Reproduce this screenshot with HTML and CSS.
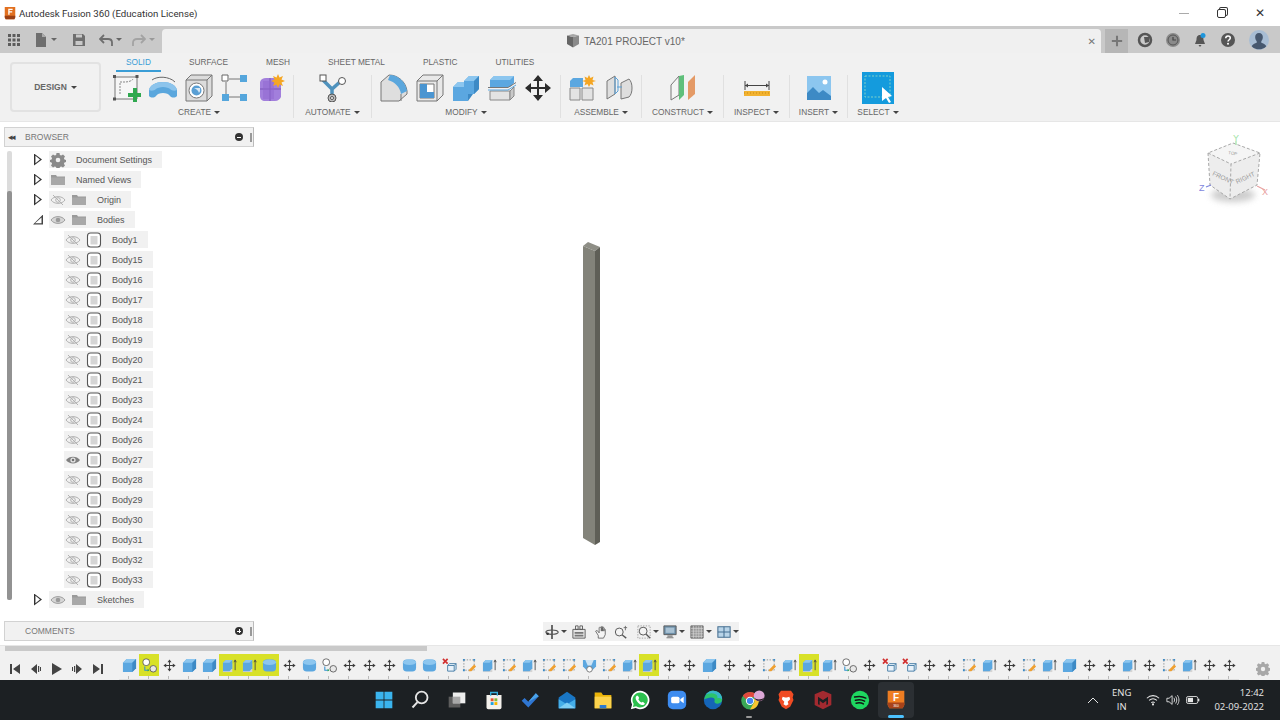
FILE: index.html
```html
<!DOCTYPE html>
<html lang="en">
<head>
    <meta charset="UTF-8">
    <title>Autodesk Fusion 360 (Education License)</title>
    <link rel="stylesheet" href="styles.css">
</head>
<body>
    <!-- icon sheet -->
    <svg class="icon-sheet" xmlns="http://www.w3.org/2000/svg">
        <symbol id="app-f" viewBox="0 0 16 16"><path d="M2 1h12v11l-1 3H3l-1-3z" fill="#e2701f"/><path d="M2 11h12v2l-1 2H3l-1-2z" fill="#9c3f12"/><path d="M6 3h5v1.500H7.500v1.500H10.500v1.500H7.500V10H6z" fill="#fff"/></symbol>
        <!-- top bar -->
        <symbol id="b-grid" viewBox="0 0 14 14"><path d="M1 1h3v3H1zM5.500 1h3v3h-3zM10 1h3v3h-3zM1 5.500h3v3H1zM5.500 5.500h3v3h-3zM10 5.500h3v3h-3zM1 10h3v3H1zM5.500 10h3v3h-3zM10 10h3v3h-3z" fill="#5c5c5c"/></symbol>
        <symbol id="b-doc" viewBox="0 0 14 14"><path d="M2 0h6l4 4v10H2z" fill="#6e6e6e"/><path d="M8 0l4 4H8z" fill="#aaa"/></symbol>
        <symbol id="b-save" viewBox="0 0 14 14"><path d="M1 1h10l2 2v10H1z" fill="#6e6e6e"/><path d="M4 1.500h6v3H4z" fill="#c9c9c9"/><path d="M3.500 8h7v4H3.500z" fill="#c9c9c9"/></symbol>
        <symbol id="b-undo" viewBox="0 0 14 14"><path d="M5 2L1 6l4 4M1.500 6H9c2.500 0 4 1.500 4 3.500V13" fill="none" stroke="#6e6e6e" stroke-width="1.800"/></symbol>
        <symbol id="b-redo" viewBox="0 0 14 14"><path d="M9 2l4 4-4 4M12.500 6H5C2.500 6 1 7.500 1 9.500V13" fill="none" stroke="#a3a3a3" stroke-width="1.800"/></symbol>
        <symbol id="b-plus" viewBox="0 0 14 14"><path d="M7 1v12M1 7h12" stroke="#777" stroke-width="2.400"/></symbol>
        <symbol id="b-data" viewBox="0 0 16 16"><circle cx="8" cy="8" r="6" fill="none" stroke="#555" stroke-width="2.500"/><path d="M7 5h6l-1 5-4 1z" fill="#555"/></symbol>
        <symbol id="b-clock" viewBox="0 0 16 16"><circle cx="8" cy="8" r="7" fill="#8a8a8a"/><circle cx="8" cy="8" r="5" fill="none" stroke="#555"/><path d="M8 5v3h3" fill="none" stroke="#444" stroke-width="1.200"/></symbol>
        <symbol id="b-bell" viewBox="0 0 16 16"><path d="M8 3c-3 0-3.500 2.500-3.500 5L3 12h10l-1.500-4c0-2.500-.5-5-3.500-5z" fill="#555"/><path d="M6.500 13h3L8 15z" fill="#555"/><circle cx="11" cy="3.500" r="2.500" fill="#1f96dc"/></symbol>
        <symbol id="b-help" viewBox="0 0 16 16"><circle cx="8" cy="8" r="7" fill="#555"/><path d="M5.700 6.200C5.800 4.800 6.800 4 8 4s2.300.8 2.300 2.100c0 1.600-2.300 1.700-2.300 3.500" fill="none" stroke="#fff" stroke-width="1.500"/><circle cx="8" cy="11.800" r="1" fill="#fff"/></symbol>
        <symbol id="b-avatar" viewBox="0 0 20 20"><circle cx="10" cy="10" r="10" fill="#a8bdd4"/><path d="M10 3c2.800 0 4 2.200 3.800 4.600-.1 1.600-.8 3-1.500 3.700v1.500c1.800.8 4.200 1.500 5 3.400A10 10 0 0 1 2.700 16.200c.8-1.900 3.200-2.600 5-3.400v-1.500C7 10.600 6.300 9.200 6.200 7.600 6 5.200 7.200 3 10 3z" fill="#47586f"/></symbol>
        <symbol id="b-part" viewBox="0 0 14 14"><path d="M7 3L1 1.500V10l6 3.500z" fill="#666"/><path d="M7 3l6-1.500V10l-6 3.500z" fill="#8a8a8a"/><path d="M1 1.500L7 0l6 1.500L7 3z" fill="#a5a5a5"/></symbol>
        <!-- ribbon -->
        <symbol id="r-sketch" viewBox="0 0 28 28"><path d="M2 3h22v22H2z" fill="#f6f6f6" stroke="#777"/><path d="M0 1h3v3H0zM22.500 1h3v3h-3zM0 23.500h3v3H0z" fill="#555"/><path d="M7 20V8h5c3 0 7-1 8-3" fill="none" stroke="#888" stroke-dasharray="2 1"/><path d="M20 14h4v5h4v4h-4v5h-4v-5h-5v-4h5z" fill="#2fa84f"/></symbol>
        <symbol id="r-revolve" viewBox="0 0 28 28"><path d="M3 6C8 2 20 2 26 8" fill="none" stroke="#666"/><path d="M0 16C1 11 7 8 14 8s13 3 14 8v6c-2 2-5 2-7 0-1-2-4-3-7-3s-6 1-7 3c-2 2-5 2-7 0z" fill="#5ba7dd"/><path d="M0 16C1 11 7 8 14 8s13 3 14 8c-2 1-5 1-7-1-1-1-4-2-7-2s-6 1-7 2c-2 2-5 2-7 1z" fill="#8cc4ec"/></symbol>
        <symbol id="r-hole" viewBox="0 0 28 28"><path d="M1 6l5-5h21v21l-5 5H1z" fill="#dcdcdc" stroke="#777"/><path d="M1 6h21v21" fill="none" stroke="#777"/><path d="M22 6l5-5" stroke="#777"/><circle cx="11.500" cy="16.500" r="7.500" fill="#fff" stroke="#777"/><circle cx="11.500" cy="16.500" r="5" fill="#5a9fd4"/><path d="M9 14h6a6 6 0 0 1-1 5c-1-3-3-4-5-5z" fill="#d8e8f4"/></symbol>
        <symbol id="r-param" viewBox="0 0 28 28"><path d="M8 5h11M5 8v12M8 23h11" stroke="#777"/><path d="M1 1h6v6H1z" fill="#fff" stroke="#666"/><path d="M19 1h7v7h-7zM1 20h7v7H1zM19 20h7v7h-7z" fill="#55a6dc"/></symbol>
        <symbol id="r-form" viewBox="0 0 28 28"><path d="M3 8c1-3 3-4 6-4h8l7 6v13c-1 2-3 4-6 4H8c-3 0-5-2-5-5z" fill="#a27fdc"/><path d="M13 4v23M3 15h21" stroke="#7a57b8"/><path d="M6 7h11v18H6z" fill="#8f68cf" opacity=".5"/><path d="M21 0l1.500 3.500L26 2l-1.500 3.500L28 7l-3.500 1.500L26 12l-3.500-1.500L21 14l-1.500-3.500L16 12l1.500-3.500L14 7l3.500-1.500L16 2l3.500 1.500z" fill="#f5a623"/></symbol>
        <symbol id="r-auto" viewBox="0 0 28 28"><path d="M4 6l9 9 9-8M13 15v7" fill="none" stroke="#4f92bd" stroke-width="3.500"/><rect x="1" y="1" width="6" height="6" fill="#fff" stroke="#555"/><circle cx="23" cy="7" r="3.500" fill="#fff" stroke="#555"/><circle cx="13" cy="24" r="4" fill="#bbb" stroke="#555"/><circle cx="13" cy="24" r="1.500" fill="#fff" stroke="#555"/></symbol>
        <symbol id="r-fillet" viewBox="0 0 28 28"><path d="M1 8L9 1c9 0 17 7 18 16v3l-8 7H1z" fill="#dedede" stroke="#777"/><path d="M10 1c8 0 16 7 17 16l-6 3C20 13 15 8 8 6z" fill="#5ba7dd"/><path d="M21 20v7" stroke="#777"/></symbol>
        <symbol id="r-shell" viewBox="0 0 28 28"><path d="M1 7l6-6h20v20l-6 6H1z" fill="#e8e8e8" stroke="#777"/><path d="M1 7h20v20M21 7l6-6" fill="none" stroke="#777"/><path d="M4 10h14v14H4z" fill="#fff" stroke="#777"/><path d="M4 10h7v8h7v6H4z" fill="#4a95d1"/></symbol>
        <symbol id="r-combine" viewBox="0 0 28 28"><path d="M12 7l5-5h10v13l-5 5h-6v7H1V13l5-5h6z" fill="#5ba7e0"/><path d="M12 7l5-5h10l-5 5zM1 13l5-5h6v5z" fill="#8cc6ef"/><path d="M22 7l5-5v13l-5 5zM16 20l5 0-5 7z" fill="#3d8ac5"/></symbol>
        <symbol id="r-split" viewBox="0 0 28 28"><path d="M2 17h20v9H2z" fill="#e3e3e3" stroke="#888"/><path d="M22 17l4-4v9l-4 4z" fill="#c9c9c9" stroke="#888"/><path d="M2 6l4-4h20v7l-4 4H2z" fill="#5ba7e0"/><path d="M2 6l4-4h20l-4 4z" fill="#8cc6ef"/><path d="M0 16l20 0 8-5" fill="none" stroke="#5ba7e0"/><path d="M0 13.500l20 0 8-5" fill="none" stroke="#777"/></symbol>
        <symbol id="r-move" viewBox="0 0 28 28"><path d="M14 1l5 6h-4v6h6V9l6 5-6 5v-4h-6v6h4l-5 6-5-6h4v-6H7v4l-6-5 6-5v4h6V7H9z" fill="#2b2b2b"/></symbol>
        <symbol id="r-new" viewBox="0 0 28 28"><path d="M1 7l3-3h10v9H1z" fill="#5ba7e0"/><path d="M1 14h10v12H1zM13 14h11v12H13z" fill="#e3e3e3" stroke="#888"/><path d="M20 1l1.500 3 3-1.500-1 3.500 3.500 1-3.500 1 1 3.500-3-1.500-1.500 3-1.500-3-3 1.500 1-3.500-3.500-1 3.500-1-1-3.500 3 1.500z" fill="#f5a623"/></symbol>
        <symbol id="r-joint" viewBox="0 0 28 28"><path d="M2 7l8-5v18l-8 5zM16 9l8-4c2 2 3 5 3 9s-1 7-3 9l-8 2z" fill="#dedede" stroke="#777"/><path d="M10 3l3 3v11l-3 3zM12 13h5" fill="none" stroke="#5b9fd4"/></symbol>
        <symbol id="r-plane" viewBox="0 0 28 28"><path d="M2 11l8-9v19l-8 5z" fill="#f4f4f4" stroke="#777"/><path d="M10 2l5-1v20l-5 5z" fill="#5fbf7a"/><path d="M19 8l7-7v19l-7 6z" fill="#e49a66"/></symbol>
        <symbol id="r-measure" viewBox="0 0 28 28"><path d="M2 7v9M26 7v9M2 11.500h24" fill="none" stroke="#444"/><path d="M2 11.500l3-2v4zM26 11.500l-3-2v4z" fill="#444"/><path d="M1 17h26v5H1z" fill="#f2b230"/><path d="M1 19h26" stroke="#c98a10" stroke-dasharray="1 2"/></symbol>
        <symbol id="r-image" viewBox="0 0 28 28"><path d="M2 2h24v24H2z" fill="#8cc6ef"/><circle cx="20" cy="8" r="2.500" fill="#fff"/><path d="M2 19l6-6 6 6 4-3 8 6v4H2z" fill="#3d8ac5"/></symbol>
        <symbol id="r-select" viewBox="0 0 32 32"><path d="M0 0h32v32H0z" fill="#149bdd"/><path d="M3 4h25v21H3z" fill="none" stroke="#7ed0c8" stroke-dasharray="2 1.500"/><path d="M20 15l10 9-4 1 3 5-2 1-3-5-4 3z" fill="#fff"/></symbol>
        <!-- browser tree -->
        <symbol id="t-gear" viewBox="0 0 16 16"><path d="M6.500 1h3l.4 2 1.300.6 1.800-1.100 2 2-1.100 1.800.6 1.300 2 .4v2l-2 .4-.6 1.300 1.100 1.800-2 2-1.800-1.100-1.300.6-.4 2h-3l-.4-2-1.300-.6-1.800 1.100-2-2 1.100-1.800-.6-1.300-2-.4v-2l2-.4.6-1.300-1.100-1.800 2-2 1.800 1.100 1.300-.6z" fill="#8a8a8a"/><circle cx="8" cy="8" r="2.300" fill="#f0f0f0"/></symbol>
        <symbol id="t-folder" viewBox="0 0 16 16"><path d="M1 3h5l1 1.500h8V13H1z" fill="#9a9a9a"/><path d="M1 5.500h14V13H1z" fill="#a8a8a8"/></symbol>
        <symbol id="t-eye" viewBox="0 0 16 16"><path d="M1 8c3-4.500 11-4.500 14 0-3 4.500-11 4.500-14 0z" fill="#d6d6d6" stroke="#9d9d9d"/><circle cx="8" cy="8" r="2.300" fill="#9a9a9a"/></symbol>
        <symbol id="t-eye-on" viewBox="0 0 16 16"><path d="M1 8c3-4.500 11-4.500 14 0-3 4.500-11 4.500-14 0z" fill="#808080"/><circle cx="8" cy="8" r="2.600" fill="#e4e4e4"/><circle cx="8" cy="8" r="1.300" fill="#707070"/></symbol>
        <symbol id="t-eye-off" viewBox="0 0 16 16"><path d="M1 8c3-4.500 11-4.500 14 0-3 4.500-11 4.500-14 0z" fill="none" stroke="#b2b2b2"/><circle cx="8" cy="8" r="2.300" fill="none" stroke="#b2b2b2"/><path d="M3 3l10 10" stroke="#b2b2b2"/></symbol>
        <symbol id="t-body" viewBox="0 0 16 16"><rect x="1.500" y="1" width="13" height="14" rx="3" fill="#fff" stroke="#555" stroke-width="1.100"/><path d="M4.500 4h7v8.500h-7z" fill="#d5d5d5"/></symbol>
        <!-- timeline -->
        <symbol id="l-box" viewBox="0 0 16 16"><path d="M1 5l4-4h10v10l-4 4H1z" fill="#5ba7e0"/><path d="M1 5l4-4h10l-4 4z" fill="#8cc6ef"/><path d="M11 5l4-4v10l-4 4z" fill="#3d8ac5"/></symbol>
        <symbol id="l-cyl" viewBox="0 0 16 16"><rect x="1" y="1.500" width="14" height="13" rx="4" fill="#5ba7e0"/><ellipse cx="8" cy="4.500" rx="7" ry="3" fill="#8cc6ef"/></symbol>
        <symbol id="l-move" viewBox="0 0 16 16"><path d="M8 1.500l2.200 3H8.500v3h3V5.800L14.500 8l-3 2.200V8.500h-3v3h1.700L8 14.500l-2.200-3h1.700v-3h-3v1.700L1.500 8l3-2.200v1.700h3v-3H5.800z" fill="#3c3c3c"/></symbol>
        <symbol id="l-press" viewBox="0 0 16 16"><path d="M1 6h10v9H1z" fill="#d4d4d4"/><path d="M1 5l3-3h7v9l-3 3H1z" fill="#5ba7e0"/><path d="M1 5l3-3h7L8 5z" fill="#8cc6ef"/><path d="M14 13V3M12.800 4.500L14 2l1.200 2.500" fill="none" stroke="#444" stroke-width=".9"/></symbol>
        <symbol id="l-sketch" viewBox="0 0 16 16"><path d="M2 2h11v11H2z" fill="none" stroke="#888" stroke-dasharray="1.500 1.500" stroke-width=".9"/><path d="M1 1h2v2H1zM12 1h2v2h-2zM1 12h2v2H1z" fill="#3d8ac5"/><path d="M7 14l1-2 5-5 2 2-5 5z" fill="#f0a030"/></symbol>
        <symbol id="l-joint" viewBox="0 0 16 16"><rect x="1" y="1" width="7" height="7" rx="3" fill="#fff" stroke="#555" stroke-width=".9"/><circle cx="12" cy="11.500" r="3.500" fill="#e8e8e8" stroke="#555" stroke-width=".9"/><path d="M3 9v4h4" fill="none" stroke="#2f8fd0" stroke-width="1.100"/><path d="M6 11.500L8 13l-2 1.500" fill="#2fa84f"/></symbol>
        <symbol id="l-del" viewBox="0 0 16 16"><path d="M1 1l5 5M6 1L1 6" stroke="#d13030" stroke-width="1.800"/><path d="M6 8l2-2h7v6l-2 2H6z" fill="#e8f2fa" stroke="#4a7fa8"/><path d="M6 8h7v6M13 8l2-2" fill="none" stroke="#4a7fa8"/></symbol>
        <symbol id="l-shell" viewBox="0 0 16 16"><path d="M1 2h14v7l-4 4H5L1 9z" fill="#5ba7e0"/><path d="M3.500 2h9L10 8H6z" fill="#cfe4f4"/><circle cx="8" cy="12" r="3" fill="#fff" stroke="#777"/></symbol>
        <symbol id="l-gear" viewBox="0 0 16 16"><path d="M6.500 0h3l.4 2 1.300.6 1.800-1.100 2 2-1.100 1.800.6 1.300 2 .4v3l-2 .4-.6 1.300 1.100 1.800-2 2-1.800-1.100-1.300.6-.4 2h-3l-.4-2-1.300-.6-1.800 1.100-2-2 1.100-1.800-.6-1.300-2-.4v-3l2-.4.6-1.300-1.100-1.800 2-2 1.800 1.100 1.300-.6z" fill="#a8a8a8"/><circle cx="8" cy="8" r="2.500" fill="#f0f0f0"/></symbol>
        <symbol id="c-first" viewBox="0 0 12 12"><path d="M1 1h2v10H1zM11 1v10L4 6z" fill="#444"/></symbol>
        <symbol id="c-prev" viewBox="0 0 12 12"><path d="M7 1v10L1 6zM8 3h1.200v6H8zM10 4h1v4h-1z" fill="#444"/></symbol>
        <symbol id="c-play" viewBox="0 0 12 12"><path d="M1 0l10 6-10 6z" fill="#444"/></symbol>
        <symbol id="c-next" viewBox="0 0 12 12"><path d="M5 1v10l6-5zM3 3h1.200v6H3zM1 4h1v4H1z" fill="#444"/></symbol>
        <symbol id="c-last" viewBox="0 0 12 12"><path d="M9 1h2v10H9zM1 1v10l7-5z" fill="#444"/></symbol>
        <!-- viewport bar -->
        <symbol id="v-orbit" viewBox="0 0 16 16"><path d="M7 0h2v16H7z" fill="#555"/><path d="M1 8c1-3 13-3 14 0s-13 4-14 0z" fill="none" stroke="#555" stroke-width="1.300"/><circle cx="3" cy="10" r="1.500" fill="#333"/></symbol>
        <symbol id="v-look" viewBox="0 0 16 16"><path d="M1 5h14v10H1z" fill="#e6e6e6" stroke="#555"/><path d="M3 8h10v2H3zM3 11h10v2H3z" fill="#777"/><path d="M4 1h3v4H4zM9 1h3v4H9z" fill="none" stroke="#555"/></symbol>
        <symbol id="v-hand" viewBox="0 0 16 16"><path d="M3 7l3 5v3h6l2-4V5c-1-1-1.500 0-1.500 0v2-4c-1-1-1.500 0-1.500 0v4-5c-1-1-1.500 0-1.500 0v5-4C7.500 2 7 3 7 3v6L5 6.500C3.500 6 3 7 3 7z" fill="#f4f4f4" stroke="#555" stroke-width=".9"/></symbol>
        <symbol id="v-zoom" viewBox="0 0 16 16"><circle cx="6" cy="8" r="4.500" fill="#f4f4f4" stroke="#555" stroke-width="1.100"/><path d="M9.500 11.500L14 15" stroke="#555" stroke-width="1.500"/><path d="M13 1v5M11 3h4" stroke="#666"/></symbol>
        <symbol id="v-fit" viewBox="0 0 16 16"><path d="M1 1h14v14H1z" fill="none" stroke="#999" stroke-dasharray="1.500 1.500"/><circle cx="7" cy="7" r="4.500" fill="#f4f4f4" stroke="#555" stroke-width="1.100"/><path d="M10.500 10.500L15 15" stroke="#555" stroke-width="1.600"/></symbol>
        <symbol id="v-display" viewBox="0 0 16 16"><path d="M1 1h14v10H1z" fill="#6d8fa8" stroke="#555"/><path d="M3 3h10v6H3z" fill="#a9c2d4"/><path d="M5 12h6v1.500H5zM4 14h8v1H4z" fill="#777"/></symbol>
        <symbol id="v-grid" viewBox="0 0 16 16"><path d="M1 1h14v14H1z" fill="#999" stroke="#666"/><path d="M4 1v14M7 1v14M10 1v14M13 1v14M1 4h14M1 7h14M1 10h14M1 13h14" stroke="#ddd" stroke-width=".6"/></symbol>
        <symbol id="v-split" viewBox="0 0 16 16"><path d="M1 2h14v12H1z" fill="#b9d4e8" stroke="#456f91" stroke-width="1.200"/><path d="M8 2v12M1 8h14" stroke="#456f91" stroke-width="1.200"/></symbol>
    </svg>

    <!-- window title -->
    <header class="titlebar">
        <svg class="app-icon"><use href="#app-f"/></svg>
        <span class="title-text">Autodesk Fusion 360 (Education License)</span>
        <div class="win-controls">
            <span class="win-btn win-min"></span>
            <span class="win-btn win-restore"></span>
            <span class="win-btn win-close">&#x2715;</span>
        </div>
    </header>

    <!-- quick access + document tab -->
    <div class="topbar">
        <div class="quick-tools">
            <svg class="qt qt-grid"><use href="#b-grid"/></svg>
            <svg class="qt qt-doc"><use href="#b-doc"/></svg><i class="caret"></i>
            <svg class="qt qt-save"><use href="#b-save"/></svg>
            <svg class="qt qt-undo"><use href="#b-undo"/></svg><i class="caret"></i>
            <svg class="qt qt-redo"><use href="#b-redo"/></svg><i class="caret caret-dim"></i>
        </div>
        <div class="doc-tab">
            <div class="doc-name">
                <svg class="doc-icon"><use href="#b-part"/></svg>
                <span>TA201 PROJECT v10*</span>
            </div>
            <span class="doc-close">&#x2715;</span>
        </div>
        <div class="new-tab"><svg class="new-tab-icon"><use href="#b-plus"/></svg></div>
        <div class="user-tools">
            <svg class="ut"><use href="#b-data"/></svg>
            <svg class="ut"><use href="#b-clock"/></svg>
            <svg class="ut"><use href="#b-bell"/></svg>
            <svg class="ut"><use href="#b-help"/></svg>
            <svg class="ut-avatar"><use href="#b-avatar"/></svg>
        </div>
    </div>

    <!-- ribbon -->
    <div class="ribbon">
        <button class="design-btn">DESIGN<i class="caret caret-dark"></i></button>
        <div class="ribbon-main">
            <div class="tabs">
                <span class="tab tab-active">SOLID</span>
                <span class="tab">SURFACE</span>
                <span class="tab">MESH</span>
                <span class="tab">SHEET METAL</span>
                <span class="tab">PLASTIC</span>
                <span class="tab">UTILITIES</span>
            </div>
            <div class="tools">
                <div class="group group-create">
                    <div class="group-icons">
                        <svg class="ri"><use href="#r-sketch"/></svg>
                        <svg class="ri"><use href="#r-revolve"/></svg>
                        <svg class="ri"><use href="#r-hole"/></svg>
                        <svg class="ri"><use href="#r-param"/></svg>
                        <svg class="ri"><use href="#r-form"/></svg>
                    </div>
                    <div class="group-label">CREATE<i class="caret caret-dark"></i></div>
                </div>
                <div class="group group-automate">
                    <div class="group-icons"><svg class="ri"><use href="#r-auto"/></svg></div>
                    <div class="group-label">AUTOMATE<i class="caret caret-dark"></i></div>
                </div>
                <div class="group group-modify">
                    <div class="group-icons">
                        <svg class="ri"><use href="#r-fillet"/></svg>
                        <svg class="ri"><use href="#r-shell"/></svg>
                        <svg class="ri"><use href="#r-combine"/></svg>
                        <svg class="ri"><use href="#r-split"/></svg>
                        <svg class="ri"><use href="#r-move"/></svg>
                    </div>
                    <div class="group-label">MODIFY<i class="caret caret-dark"></i></div>
                </div>
                <div class="group group-assemble">
                    <div class="group-icons">
                        <svg class="ri"><use href="#r-new"/></svg>
                        <svg class="ri"><use href="#r-joint"/></svg>
                    </div>
                    <div class="group-label">ASSEMBLE<i class="caret caret-dark"></i></div>
                </div>
                <div class="group group-construct">
                    <div class="group-icons"><svg class="ri"><use href="#r-plane"/></svg></div>
                    <div class="group-label">CONSTRUCT<i class="caret caret-dark"></i></div>
                </div>
                <div class="group group-inspect">
                    <div class="group-icons"><svg class="ri"><use href="#r-measure"/></svg></div>
                    <div class="group-label">INSPECT<i class="caret caret-dark"></i></div>
                </div>
                <div class="group group-insert">
                    <div class="group-icons"><svg class="ri"><use href="#r-image"/></svg></div>
                    <div class="group-label">INSERT<i class="caret caret-dark"></i></div>
                </div>
                <div class="group group-select">
                    <div class="group-icons"><svg class="ri-select"><use href="#r-select"/></svg></div>
                    <div class="group-label">SELECT<i class="caret caret-dark"></i></div>
                </div>
            </div>
        </div>
    </div>

    <!-- 3d canvas -->
    <main class="canvas">
        <div class="sidebar">
            <div class="panel-head">
                <span class="panel-arrows">&#x25C2;&#x25C2;</span>
                <span class="panel-title">BROWSER</span>
                <span class="panel-dot panel-dot-minus"></span>
                <span class="panel-grip"></span>
            </div>
            <div class="tree">
                <div class="tree-scroll"><div class="tree-thumb"></div></div>
                <div class="tree-rows">
                    <div class="row"><i class="arrow"></i><div class="pill"><svg class="ti"><use href="#t-gear"/></svg><span class="lbl">Document Settings</span></div></div>
                    <div class="row"><i class="arrow"></i><div class="pill"><svg class="ti"><use href="#t-folder"/></svg><span class="lbl">Named Views</span></div></div>
                    <div class="row"><i class="arrow"></i><div class="pill"><svg class="ti"><use href="#t-eye-off"/></svg><svg class="ti"><use href="#t-folder"/></svg><span class="lbl">Origin</span></div></div>
                    <div class="row"><i class="arrow-open"></i><div class="pill"><svg class="ti"><use href="#t-eye"/></svg><svg class="ti"><use href="#t-folder"/></svg><span class="lbl">Bodies</span></div></div>
                    <div class="row row-body"><div class="pill"><svg class="ti"><use href="#t-eye-off"/></svg><svg class="ti"><use href="#t-body"/></svg><span class="lbl">Body1</span></div></div>
                    <div class="row row-body"><div class="pill"><svg class="ti"><use href="#t-eye-off"/></svg><svg class="ti"><use href="#t-body"/></svg><span class="lbl">Body15</span></div></div>
                    <div class="row row-body"><div class="pill"><svg class="ti"><use href="#t-eye-off"/></svg><svg class="ti"><use href="#t-body"/></svg><span class="lbl">Body16</span></div></div>
                    <div class="row row-body"><div class="pill"><svg class="ti"><use href="#t-eye-off"/></svg><svg class="ti"><use href="#t-body"/></svg><span class="lbl">Body17</span></div></div>
                    <div class="row row-body"><div class="pill"><svg class="ti"><use href="#t-eye-off"/></svg><svg class="ti"><use href="#t-body"/></svg><span class="lbl">Body18</span></div></div>
                    <div class="row row-body"><div class="pill"><svg class="ti"><use href="#t-eye-off"/></svg><svg class="ti"><use href="#t-body"/></svg><span class="lbl">Body19</span></div></div>
                    <div class="row row-body"><div class="pill"><svg class="ti"><use href="#t-eye-off"/></svg><svg class="ti"><use href="#t-body"/></svg><span class="lbl">Body20</span></div></div>
                    <div class="row row-body"><div class="pill"><svg class="ti"><use href="#t-eye-off"/></svg><svg class="ti"><use href="#t-body"/></svg><span class="lbl">Body21</span></div></div>
                    <div class="row row-body"><div class="pill"><svg class="ti"><use href="#t-eye-off"/></svg><svg class="ti"><use href="#t-body"/></svg><span class="lbl">Body23</span></div></div>
                    <div class="row row-body"><div class="pill"><svg class="ti"><use href="#t-eye-off"/></svg><svg class="ti"><use href="#t-body"/></svg><span class="lbl">Body24</span></div></div>
                    <div class="row row-body"><div class="pill"><svg class="ti"><use href="#t-eye-off"/></svg><svg class="ti"><use href="#t-body"/></svg><span class="lbl">Body26</span></div></div>
                    <div class="row row-body"><div class="pill"><svg class="ti"><use href="#t-eye-on"/></svg><svg class="ti"><use href="#t-body"/></svg><span class="lbl">Body27</span></div></div>
                    <div class="row row-body"><div class="pill"><svg class="ti"><use href="#t-eye-off"/></svg><svg class="ti"><use href="#t-body"/></svg><span class="lbl">Body28</span></div></div>
                    <div class="row row-body"><div class="pill"><svg class="ti"><use href="#t-eye-off"/></svg><svg class="ti"><use href="#t-body"/></svg><span class="lbl">Body29</span></div></div>
                    <div class="row row-body"><div class="pill"><svg class="ti"><use href="#t-eye-off"/></svg><svg class="ti"><use href="#t-body"/></svg><span class="lbl">Body30</span></div></div>
                    <div class="row row-body"><div class="pill"><svg class="ti"><use href="#t-eye-off"/></svg><svg class="ti"><use href="#t-body"/></svg><span class="lbl">Body31</span></div></div>
                    <div class="row row-body"><div class="pill"><svg class="ti"><use href="#t-eye-off"/></svg><svg class="ti"><use href="#t-body"/></svg><span class="lbl">Body32</span></div></div>
                    <div class="row row-body"><div class="pill"><svg class="ti"><use href="#t-eye-off"/></svg><svg class="ti"><use href="#t-body"/></svg><span class="lbl">Body33</span></div></div>
                    <div class="row"><i class="arrow"></i><div class="pill"><svg class="ti"><use href="#t-eye"/></svg><svg class="ti"><use href="#t-folder"/></svg><span class="lbl">Sketches</span></div></div>
                </div>
            </div>
            <div class="panel-head">
                <span class="panel-title panel-title-solo">COMMENTS</span>
                <span class="panel-dot panel-dot-plus"></span>
                <span class="panel-grip"></span>
            </div>
        </div>

        <!-- the model -->
        <svg class="model" width="20" height="306" viewBox="0 0 20 306">
            <path d="M1 4L6 0l12 5-5 4z" fill="#8e8e86"/>
            <path d="M1 4l12 5v294L1 296z" fill="#83837a"/>
            <path d="M13 9l5-4v295l-5 3z" fill="#5f5f57"/>
        </svg>

        <!-- view cube -->
        <svg class="viewcube" width="80" height="90" viewBox="0 0 80 90">
            <ellipse class="cube-shadow" cx="34" cy="64" rx="22" ry="7"/>
            <path d="M9 22l25-10 27 10-3 32-27 14-20-14z" fill="#ededed"/>
            <path d="M9 22l25-10 27 10-29 11z" fill="#f5f5f5"/>
            <path d="M9 22l23 11-1 35M61 22L32 33M9 22l2 32 20 14 27-14 3-32-27-10z" fill="none" stroke="#a8a8a8" stroke-dasharray="3 2"/>
            <text class="cube-text" transform="translate(13 44) rotate(25)">FRONT</text>
            <text class="cube-text" transform="translate(38 53) rotate(-25)">RIGHT</text>
            <text class="cube-text cube-small" transform="translate(29 23) rotate(10)">TOP</text>
            <path d="M37 10v4" stroke="#9fe3a6" stroke-width="1.200"/>
            <path d="M7 56l5-2" stroke="#7f86dd" stroke-width="1.200"/>
            <path d="M58 55l8 4" stroke="#e8a0a0" stroke-width="1.200"/>
            <text class="axis axis-y" x="34" y="10">Y</text>
            <text class="axis axis-z" x="0" y="60">Z</text>
            <text class="axis axis-x" x="63" y="64">X</text>
        </svg>

        <!-- view controls -->
        <div class="viewbar">
            <svg class="vi"><use href="#v-orbit"/></svg><i class="caret caret-dark"></i>
            <svg class="vi vi-look"><use href="#v-look"/></svg>
            <svg class="vi vi-hand"><use href="#v-hand"/></svg>
            <svg class="vi vi-zoom"><use href="#v-zoom"/></svg>
            <svg class="vi vi-fit"><use href="#v-fit"/></svg><i class="caret caret-dark"></i>
            <svg class="vi vi-display"><use href="#v-display"/></svg><i class="caret caret-dark"></i>
            <svg class="vi vi-grid"><use href="#v-grid"/></svg><i class="caret caret-dark"></i>
            <svg class="vi vi-split"><use href="#v-split"/></svg><i class="caret caret-dark"></i>
        </div>
    </main>

    <!-- timeline -->
    <div class="timeline-scroll"><div class="timeline-thumb"></div></div>
    <div class="timeline">
        <div class="tl-controls">
            <svg class="tc"><use href="#c-first"/></svg>
            <svg class="tc"><use href="#c-prev"/></svg>
            <svg class="tc"><use href="#c-play"/></svg>
            <svg class="tc"><use href="#c-next"/></svg>
            <svg class="tc"><use href="#c-last"/></svg>
        </div>
        <div class="tl-track">
            <div class="tl-item"><svg class="li"><use href="#l-box"/></svg></div>
            <div class="tl-item tl-hl"><svg class="li"><use href="#l-joint"/></svg></div>
            <div class="tl-item"><svg class="li"><use href="#l-move"/></svg></div>
            <div class="tl-item"><svg class="li"><use href="#l-box"/></svg></div>
            <div class="tl-item"><svg class="li"><use href="#l-box"/></svg></div>
            <div class="tl-item tl-hl"><svg class="li"><use href="#l-press"/></svg></div>
            <div class="tl-item tl-hl"><svg class="li"><use href="#l-press"/></svg></div>
            <div class="tl-item tl-hl"><svg class="li"><use href="#l-cyl"/></svg></div>
            <div class="tl-item"><svg class="li"><use href="#l-move"/></svg></div>
            <div class="tl-item"><svg class="li"><use href="#l-cyl"/></svg></div>
            <div class="tl-item"><svg class="li"><use href="#l-joint"/></svg></div>
            <div class="tl-item"><svg class="li"><use href="#l-move"/></svg></div>
            <div class="tl-item"><svg class="li"><use href="#l-move"/></svg></div>
            <div class="tl-item"><svg class="li"><use href="#l-move"/></svg></div>
            <div class="tl-item"><svg class="li"><use href="#l-cyl"/></svg></div>
            <div class="tl-item"><svg class="li"><use href="#l-cyl"/></svg></div>
            <div class="tl-item"><svg class="li"><use href="#l-del"/></svg></div>
            <div class="tl-item"><svg class="li"><use href="#l-sketch"/></svg></div>
            <div class="tl-item"><svg class="li"><use href="#l-press"/></svg></div>
            <div class="tl-item"><svg class="li"><use href="#l-sketch"/></svg></div>
            <div class="tl-item"><svg class="li"><use href="#l-press"/></svg></div>
            <div class="tl-item"><svg class="li"><use href="#l-sketch"/></svg></div>
            <div class="tl-item"><svg class="li"><use href="#l-sketch"/></svg></div>
            <div class="tl-item"><svg class="li"><use href="#l-shell"/></svg></div>
            <div class="tl-item"><svg class="li"><use href="#l-sketch"/></svg></div>
            <div class="tl-item"><svg class="li"><use href="#l-press"/></svg></div>
            <div class="tl-item tl-hl"><svg class="li"><use href="#l-press"/></svg></div>
            <div class="tl-item"><svg class="li"><use href="#l-move"/></svg></div>
            <div class="tl-item"><svg class="li"><use href="#l-move"/></svg></div>
            <div class="tl-item"><svg class="li"><use href="#l-box"/></svg></div>
            <div class="tl-item"><svg class="li"><use href="#l-move"/></svg></div>
            <div class="tl-item"><svg class="li"><use href="#l-move"/></svg></div>
            <div class="tl-item"><svg class="li"><use href="#l-sketch"/></svg></div>
            <div class="tl-item"><svg class="li"><use href="#l-press"/></svg></div>
            <div class="tl-item tl-hl"><svg class="li"><use href="#l-press"/></svg></div>
            <div class="tl-item"><svg class="li"><use href="#l-press"/></svg></div>
            <div class="tl-item"><svg class="li"><use href="#l-joint"/></svg></div>
            <div class="tl-item"><svg class="li"><use href="#l-move"/></svg></div>
            <div class="tl-item"><svg class="li"><use href="#l-del"/></svg></div>
            <div class="tl-item"><svg class="li"><use href="#l-del"/></svg></div>
            <div class="tl-item"><svg class="li"><use href="#l-move"/></svg></div>
            <div class="tl-item"><svg class="li"><use href="#l-move"/></svg></div>
            <div class="tl-item"><svg class="li"><use href="#l-sketch"/></svg></div>
            <div class="tl-item"><svg class="li"><use href="#l-press"/></svg></div>
            <div class="tl-item"><svg class="li"><use href="#l-move"/></svg></div>
            <div class="tl-item"><svg class="li"><use href="#l-sketch"/></svg></div>
            <div class="tl-item"><svg class="li"><use href="#l-press"/></svg></div>
            <div class="tl-item"><svg class="li"><use href="#l-box"/></svg></div>
            <div class="tl-item"><svg class="li"><use href="#l-move"/></svg></div>
            <div class="tl-item"><svg class="li"><use href="#l-move"/></svg></div>
            <div class="tl-item"><svg class="li"><use href="#l-press"/></svg></div>
            <div class="tl-item"><svg class="li"><use href="#l-move"/></svg></div>
            <div class="tl-item"><svg class="li"><use href="#l-sketch"/></svg></div>
            <div class="tl-item"><svg class="li"><use href="#l-press"/></svg></div>
            <div class="tl-item"><svg class="li"><use href="#l-move"/></svg></div>
            <div class="tl-item"><svg class="li"><use href="#l-move"/></svg></div>
        </div>
        <svg class="tl-gear"><use href="#l-gear"/></svg>
    </div>

    <!-- windows taskbar -->
    <footer class="taskbar">
        <div class="task-spacer"></div>
        <div class="task-apps">
            <div class="task-app"><svg class="tk" viewBox="0 0 24 24"><path d="M2 2h9.500v9.500H2zM12.500 2H22v9.500h-9.500zM2 12.500h9.500V22H2zM12.500 12.500H22V22h-9.500z" fill="#3ab4ee"/></svg></div>
            <div class="task-app"><svg class="tk" viewBox="0 0 24 24"><circle cx="14" cy="9" r="7" fill="none" stroke="#e6e6e6" stroke-width="2.200"/><path d="M9 14.500L3 21" stroke="#e6e6e6" stroke-width="2.400"/></svg></div>
            <div class="task-app"><svg class="tk" viewBox="0 0 24 24"><path d="M2 8h14v13H2z" fill="#5d5d5d"/><path d="M7 3h15v13H7z" fill="#ededed"/><path d="M7 8h9v8H7z" fill="#a8a8a8"/></svg></div>
            <div class="task-app"><svg class="tk" viewBox="0 0 24 24"><path d="M3 6h18v15c0 1-1 2-2 2H5c-1 0-2-1-2-2z" fill="#f4f1ec"/><path d="M8 7V3h8v4" fill="none" stroke="#35b0dd" stroke-width="1.600"/><path d="M8 10h3.500v3.500H8z" fill="#e5532d"/><path d="M12.500 10H16v3.500h-3.500z" fill="#7fbb3c"/><path d="M8 14.500h3.500V18H8z" fill="#1fa3e0"/><path d="M12.500 14.500H16V18h-3.500z" fill="#f7b500"/></svg></div>
            <div class="task-app"><svg class="tk" viewBox="0 0 24 24"><path d="M2 13l3.500-3.500L10 14 19 4l3.500 3.500L10 21z" fill="#2f76d2"/><path d="M5.500 9.500L10 14 19 4l3.500 3.500L10 14z" fill="#4aa3e8"/></svg></div>
            <div class="task-app"><svg class="tk" viewBox="0 0 24 24"><path d="M2 9l10-7 10 7v13H2z" fill="#1976c4"/><path d="M2 11l10 6 10-6v11H2z" fill="#45aee8"/><path d="M2 22l10-7 10 7z" fill="#7fcff5"/></svg></div>
            <div class="task-app"><svg class="tk" viewBox="0 0 24 24"><path d="M2 3h8l2 3h10v16H2z" fill="#eab308"/><path d="M2 8h20v14H2z" fill="#fcd34d"/><path d="M8 18h8v4H8z" fill="#2b7bd0"/></svg></div>
            <div class="task-app"><svg class="tk" viewBox="0 0 24 24"><path d="M12 1a11 11 0 0 0-9.500 16.500L1 23l5.800-1.500A11 11 0 1 0 12 1z" fill="#fff"/><path d="M12 3a9 9 0 0 0-7.600 13.700L3.500 20.500l3.800-1A9 9 0 1 0 12 3z" fill="#2cc04e"/><path d="M8 7c-1 1-1.500 2-1 4 1 3 4 6 7 7 2 .5 3-.5 4-1.500l-2.500-2.500-1.500 1c-2-1-3-2-4-4l1-1.500L9.500 7z" fill="#fff"/></svg></div>
            <div class="task-app"><svg class="tk" viewBox="0 0 24 24"><rect x="1" y="1" width="22" height="22" rx="6" fill="#3d8cf0"/><rect x="5" y="8" width="10" height="8" rx="2" fill="#fff"/><path d="M16 11l4-3v8l-4-3z" fill="#fff"/></svg></div>
            <div class="task-app"><svg class="tk" viewBox="0 0 24 24"><circle cx="12" cy="12" r="11" fill="#1565b8"/><path d="M1.500 11C3 4 8 1 12 1c6 0 11 5 11 10.500 0 3-2.500 5-5.500 5S13 15 14 12c.5-2-2-3.500-5-3C5 9.500 2.500 11 1.500 11z" fill="#2cc36b"/><path d="M23 11c0-5-4-10-11-10-4 0-7 2-9 5 3-2 8-3 12-1 2 1 3 3 2 5 2-1 4 0 6 1z" fill="#37b6c9"/></svg></div>
            <div class="task-app">
                <svg class="tk tk-wide" viewBox="0 0 30 24"><circle cx="12" cy="13" r="10.500" fill="#3aa757"/><path d="M12 2.500a10.500 10.500 0 0 1 9.500 6H12a4.500 4.500 0 0 0-4.500 3L3.400 7A10.500 10.500 0 0 1 12 2.500z" fill="#e0483d"/><path d="M21.500 8.500A10.500 10.500 0 0 1 12 23.500l4-7a4.500 4.500 0 0 0 .5-5.500z" fill="#f9c52f"/><circle cx="12" cy="13" r="5" fill="#fff"/><circle cx="12" cy="13" r="3.800" fill="#4285f4"/><circle cx="23" cy="7" r="6.500" fill="#dba7d6"/><path d="M17 9c2 3 9 3 12 0-1 3-3 4-6 4s-5-1-6-4z" fill="#2a1a24"/></svg>
                <i class="task-dot"></i>
            </div>
            <div class="task-app"><svg class="tk" viewBox="0 0 24 24"><path d="M6 1h12l3 4-1 4 1 3-4 8-5 3-5-3-4-8 1-3-1-4z" fill="#f04b23"/><path d="M8 8l3 1h2l3-1 1 3-3 3 1 3-3 2-3-2 1-3-3-3z" fill="#fff"/></svg></div>
            <div class="task-app"><svg class="tk" viewBox="0 0 24 24"><path d="M2 5l10-4 10 4v13l-10 5-10-5z" fill="#a32a30"/><path d="M6 8l6 4 6-4v9l-2 1v-5l-4 3-4-3v5l-2-1z" fill="#1d2023"/></svg></div>
            <div class="task-app"><svg class="tk" viewBox="0 0 24 24"><circle cx="12" cy="12" r="11" fill="#1ed760"/><path d="M5.500 8.500c4.500-1.300 9.500-1 13.500 1.200M6.500 12.300c3.700-1 8-.8 11 1.100M7.300 15.800c3-.7 6.200-.6 8.800.9" fill="none" stroke="#141414" stroke-width="1.800" stroke-linecap="round"/></svg></div>
            <div class="task-app task-app-active">
                <svg class="tk" viewBox="0 0 24 24"><path d="M2 1h20v17l-2 4H4l-2-4z" fill="#ee7d22"/><path d="M2 15h20v3l-2 4H4l-2-4z" fill="#a8431a"/><text class="fusion-f" x="12" y="13" text-anchor="middle">F</text><text class="fusion-360" x="12" y="20.500" text-anchor="middle">360</text></svg>
                <i class="task-bar"></i>
            </div>
        </div>
        <div class="tray">
            <svg class="tray-chevron" viewBox="0 0 12 8"><path d="M1 7l5-5 5 5" fill="none" stroke="#e6e6e6"/></svg>
            <div class="tray-lang"><span>ENG</span><span>IN</span></div>
            <svg class="tray-icon" viewBox="0 0 16 16"><path d="M1 6c4-4 10-4 14 0M3.500 8.500c3-2.500 6-2.500 9 0M6 11c1.500-1 2.500-1 4 0" fill="none" stroke="#e6e6e6" stroke-width="1.200"/><circle cx="8" cy="13" r="1.200" fill="#e6e6e6"/></svg>
            <svg class="tray-icon" viewBox="0 0 16 16"><path d="M1 6h2.500L7 3v10L3.500 10H1z" fill="none" stroke="#e6e6e6"/><path d="M9 5.500c1 1.500 1 3.500 0 5M11 4c1.700 2.500 1.700 5.500 0 8M13 2.500c2.400 3.500 2.400 7.500 0 11" fill="none" stroke="#e6e6e6"/></svg>
            <svg class="tray-icon" viewBox="0 0 16 16"><rect x=".5" y="4" width="13" height="8" rx="2" fill="none" stroke="#e6e6e6"/><path d="M2 5.500h6v5H2z" fill="#e6e6e6"/><path d="M14.500 6.500v3" stroke="#e6e6e6" stroke-width="1.500"/></svg>
            <div class="tray-clock"><span>12:42</span><span>02-09-2022</span></div>
        </div>
    </footer>
</body>
</html>
```

FILE: styles.css
```css
* {
    box-sizing: border-box;
}
body {
    margin: 0;
    width: 1280px;
    height: 720px;
    overflow: hidden;
    display: flex;
    flex-direction: column;
    font-family: "Liberation Sans", Arial, sans-serif;
    background: #fff;
    color: #666;
}
.icon-sheet {
    display: none;
}
i {
    display: block;
}
.caret {
    width: 0;
    height: 0;
    border-left: 3px solid transparent;
    border-right: 3px solid transparent;
    border-top: 3px solid #666;
}
.caret-dark {
    border-top-color: #444;
}
.caret-dim {
    border-top-color: #999;
}

/* title bar */
.titlebar {
    height: 26px;
    flex: none;
    display: flex;
    align-items: center;
    background: #fff;
    padding-left: 3px;
}
.app-icon {
    width: 14px;
    height: 16px;
}
.title-text {
    margin-left: 2px;
    font-family: Roboto, "Noto Sans", sans-serif;
    font-size: 9.7px;
    color: #333;
}
.win-controls {
    margin-left: auto;
    display: flex;
    align-items: center;
    gap: 26px;
    padding-right: 13px;
}
.win-btn {
    display: block;
    width: 12px;
}
.win-min {
    height: 1px;
    width: 10px;
    background: #aaa;
}
.win-restore {
    width: 9px;
    height: 9px;
    border: 1px solid #333;
    border-radius: 2px;
    box-shadow: 2px -2px 0 -1px #fff, 2px -2px 0 0 #333;
    margin-left: 2px;
    margin-right: 3px;
}
.win-close {
    font-size: 12px;
    line-height: 12px;
    color: #333;
    font-family: "DejaVu Sans", sans-serif;
}

/* quick access + tab */
.topbar {
    height: 27px;
    flex: none;
    display: flex;
    background: #c9c9c9;
}
.quick-tools {
    width: 162px;
    display: flex;
    align-items: center;
    padding-left: 7px;
}
.qt {
    width: 14px;
    height: 14px;
}
.quick-tools .caret {
    margin-left: 3px;
}
.qt-doc {
    margin-left: 13px;
}
.qt-save {
    margin-left: 15px;
}
.qt-undo {
    margin-left: 13px;
}
.qt-redo {
    margin-left: 10px;
}
.doc-tab {
    width: 939px;
    margin-top: 3px;
    background: #f0f0f0;
    border-radius: 4px 4px 0 0;
    display: flex;
    align-items: center;
    padding-right: 5px;
}
.doc-name {
    margin-left: 404px;
    display: flex;
    align-items: center;
    gap: 4px;
    font-size: 10px;
    color: #666;
}
.doc-icon {
    width: 14px;
    height: 14px;
}
.doc-close {
    margin-left: auto;
    font-size: 10px;
    color: #777;
    font-family: "DejaVu Sans", sans-serif;
}
.new-tab {
    width: 23px;
    margin: 3px 0 0 4px;
    background: #b6b6b6;
    display: flex;
    align-items: center;
    justify-content: center;
}
.new-tab-icon {
    width: 12px;
    height: 12px;
}
.user-tools {
    display: flex;
    align-items: center;
    gap: 11.7px;
    padding-left: 9px;
}
.ut {
    width: 16px;
    height: 16px;
}
.ut-avatar {
    width: 20px;
    height: 20px;
    margin-left: 1px;
}

/* ribbon */
.ribbon {
    height: 69px;
    flex: none;
    display: flex;
    background: #f1f1f1;
    border-bottom: 1px solid #e6e6e6;
}
.design-btn {
    width: 91px;
    height: 50px;
    margin: 9px 9px 0 10px;
    background: #f1f1f1;
    border: 2px solid #e2e2e2;
    border-radius: 4px;
    display: flex;
    align-items: center;
    justify-content: center;
    gap: 4px;
    font-family: inherit;
    font-size: 8.5px;
    font-weight: bold;
    color: #666;
    padding: 0;
}
.ribbon-main {
    display: flex;
    flex-direction: column;
}
.tabs {
    height: 19px;
    display: flex;
    gap: 18px;
    padding-left: 6px;
}
.tab {
    height: 19px;
    padding: 3px 10px 0;
    font-size: 8.3px;
    line-height: 12px;
    color: #666;
}
.tab-active {
    color: #3a9dd6;
    border-bottom: 2px solid #3a9dd6;
}
.tools {
    display: flex;
}
.group {
    height: 43px;
    margin-top: 3px;
    border-right: 1px solid #e0e0e0;
}
.group-create { width: 184px; padding-right: 5px; }
.group-automate { width: 78px; }
.group-modify { width: 189px; }
.group-assemble { width: 81px; }
.group-construct { width: 82px; }
.group-inspect { width: 66px; }
.group-insert { width: 58px; }
.group-select { width: 60px; border-right: none; }
.group-icons {
    height: 26px;
    display: flex;
    align-items: center;
    justify-content: center;
    gap: 8px;
}
.ri {
    width: 28px;
    height: 28px;
    flex: none;
}
.ri-select {
    width: 32px;
    height: 32px;
    flex: none;
}
.group-label {
    margin-top: 5px;
    height: 12px;
    display: flex;
    align-items: center;
    justify-content: center;
    gap: 3px;
    font-size: 8.3px;
    color: #666;
}

/* canvas */
.canvas {
    flex: 1;
    position: relative;
    background: #fff;
    min-height: 0;
}
.sidebar {
    width: 250px;
    height: 100%;
    margin-left: 4px;
    padding: 5px 0 4px;
    display: flex;
    flex-direction: column;
}
.panel-head {
    height: 20px;
    flex: none;
    display: flex;
    align-items: center;
    background: #f1f1f1;
    border: 1px solid #d2d2d2;
    border-right-color: #bbb;
    font-size: 8.5px;
    color: #777;
}
.panel-arrows {
    width: 20px;
    padding-left: 3px;
    font-size: 9px;
    letter-spacing: -2px;
    color: #444;
}
.panel-title-solo {
    margin-left: 20px;
}
.panel-dot {
    margin-left: auto;
    width: 8px;
    height: 8px;
    border-radius: 50%;
    background: #333;
    display: flex;
    align-items: center;
    justify-content: center;
}
.panel-dot-minus::before {
    content: "";
    width: 4px;
    height: 1px;
    background: #fff;
}
.panel-dot-plus {
    background: linear-gradient(#fff, #fff) center / 4px 1px no-repeat, linear-gradient(#fff, #fff) center / 1px 4px no-repeat, #333;
}
.panel-grip {
    width: 2px;
    height: 9px;
    margin: 0 1px 0 7px;
    background: #999;
}
.tree {
    flex: 1;
    min-height: 0;
    display: flex;
    padding-top: 4px;
}
.tree-scroll {
    width: 5px;
    height: 449px;
    margin-left: 3px;
    background: #dcdcdc;
    border-radius: 2px;
}
.tree-thumb {
    height: 409px;
    margin-top: 40px;
    background: #929292;
    border-radius: 2px;
}
.tree-rows {
    margin-left: 20px;
    display: flex;
    flex-direction: column;
    gap: 3px;
}
.row {
    height: 17px;
    display: flex;
    align-items: center;
    gap: 5px;
}
.row-body {
    padding-left: 32px;
}
.arrow {
    width: 8px;
    height: 12px;
    margin: 0 2px;
    background: #333;
    clip-path: polygon(0 0, 100% 50%, 0 100%, 0 0, 18% 18%, 18% 82%, 75% 50%, 18% 18%);
}
.arrow-open {
    width: 10px;
    height: 10px;
    margin: 0 1px;
    background: #444;
    clip-path: polygon(100% 0, 100% 100%, 0 100%, 100% 0, 85% 30%, 20% 88%, 85% 88%, 85% 30%);
}
.pill {
    height: 17px;
    display: flex;
    align-items: center;
    gap: 5px;
    padding: 0 10px 0 1px;
    background: #f1f1f1;
    font-size: 9px;
    color: #555;
}
.ti {
    width: 16px;
    height: 16px;
    flex: none;
}
.lbl {
    margin-left: 5px;
}

/* model + cube + view bar float on the canvas */
.model {
    position: absolute;
    left: 582px;
    top: 120px;
}
.viewcube {
    position: absolute;
    left: 1199px;
    top: 9px;
}
.cube-shadow {
    fill: #b8b8b8;
    opacity: .7;
    filter: blur(3px);
}
.cube-text {
    font-size: 6.5px;
    fill: #999;
}
.cube-small {
    font-size: 4.5px;
}
.axis {
    font-size: 9px;
}
.axis-y { fill: #9fe3a6; }
.axis-z { fill: #7f86dd; }
.axis-x { fill: #e8a0a0; }
.viewbar {
    position: absolute;
    left: 543px;
    top: 500px;
    width: 196px;
    height: 19px;
    display: flex;
    align-items: center;
    padding-left: 2px;
    background: #f1f1f1;
}
.viewbar .caret {
    margin-left: 2px;
}
.vi {
    width: 14px;
    height: 14px;
    flex: none;
}
.vi-look { margin-left: 5px; }
.vi-hand { margin-left: 7px; }
.vi-zoom { margin-left: 7px; }
.vi-fit { margin-left: 9px; }
.vi-display { margin-left: 4px; }
.vi-grid { margin-left: 5px; }
.vi-split { margin-left: 5px; }

/* timeline */
.timeline-scroll {
    height: 6px;
    flex: none;
    background: #f1f1f1;
    border-top: 1px solid #e6e6e6;
}
.timeline-thumb {
    width: 422px;
    height: 5px;
    margin-left: 5px;
    background: #c9c9c9;
}
.timeline {
    height: 29px;
    flex: none;
    display: flex;
    background: #f1f1f1;
}
.tl-controls {
    width: 119px;
    padding: 0 15px 0 9px;
    display: flex;
    align-items: center;
    justify-content: space-between;
    height: 35px;
}
.tc {
    width: 12px;
    height: 12px;
}
.tl-track {
    height: 29px;
    display: flex;
    padding: 3px 0 4px;
    border-bottom: 1px solid #ddd;
    background: repeating-linear-gradient(90deg, transparent 0 9px, #bbb 9px 10px, transparent 10px 20px) bottom / 100% 3px no-repeat;
}
.tl-item {
    width: 20px;
    height: 22px;
    display: flex;
    align-items: center;
    justify-content: center;
}
.tl-hl {
    background: #d8e128;
}
.li {
    width: 15px;
    height: 15px;
}
.tl-gear {
    width: 14px;
    height: 14px;
    margin: 11px 0 0 17px;
}

/* taskbar */
.taskbar {
    height: 40px;
    flex: none;
    display: grid;
    grid-template-columns: 1fr auto 1fr;
    background: #1c2023;
    color: #e8e8e8;
    font-family: "Open Sans", "Noto Sans", sans-serif;
    font-size: 9.5px;
}
.task-apps {
    display: flex;
    align-items: center;
}
.task-app {
    width: 36.6px;
    height: 36px;
    display: flex;
    flex-direction: column;
    align-items: center;
    justify-content: center;
    border-radius: 4px;
    padding-bottom: 1px;
    position: relative;
}
.task-app-active {
    background: #2b2f33;
}
.tk {
    width: 20px;
    height: 20px;
}
.tk-wide {
    width: 25px;
    height: 20px;
    margin-left: 5px;
}
.task-dot {
    position: absolute;
    left: 15px;
    bottom: 0;
    width: 6px;
    height: 2px;
    border-radius: 1px;
    background: #999;
}
.task-bar {
    position: absolute;
    left: 10px;
    bottom: 0;
    width: 16px;
    height: 3px;
    border-radius: 2px;
    background: #4cc2ff;
}
.fusion-f {
    font-size: 12px;
    font-weight: bold;
    fill: #fff;
    font-family: "Liberation Sans", sans-serif;
}
.fusion-360 {
    font-size: 4px;
    fill: #fff;
    font-family: "Liberation Sans", sans-serif;
}
.tray {
    display: flex;
    align-items: center;
    justify-content: flex-end;
    padding-right: 16px;
}
.tray-chevron {
    width: 12px;
    height: 8px;
    margin-right: 13px;
}
.tray-lang {
    display: flex;
    flex-direction: column;
    align-items: center;
    line-height: 14px;
    margin-right: 15px;
}
.tray-icon {
    width: 14px;
    height: 14px;
    margin-right: 6px;
}
.tray-clock {
    margin-left: 8px;
    display: flex;
    flex-direction: column;
    align-items: flex-end;
    line-height: 14px;
}
```
